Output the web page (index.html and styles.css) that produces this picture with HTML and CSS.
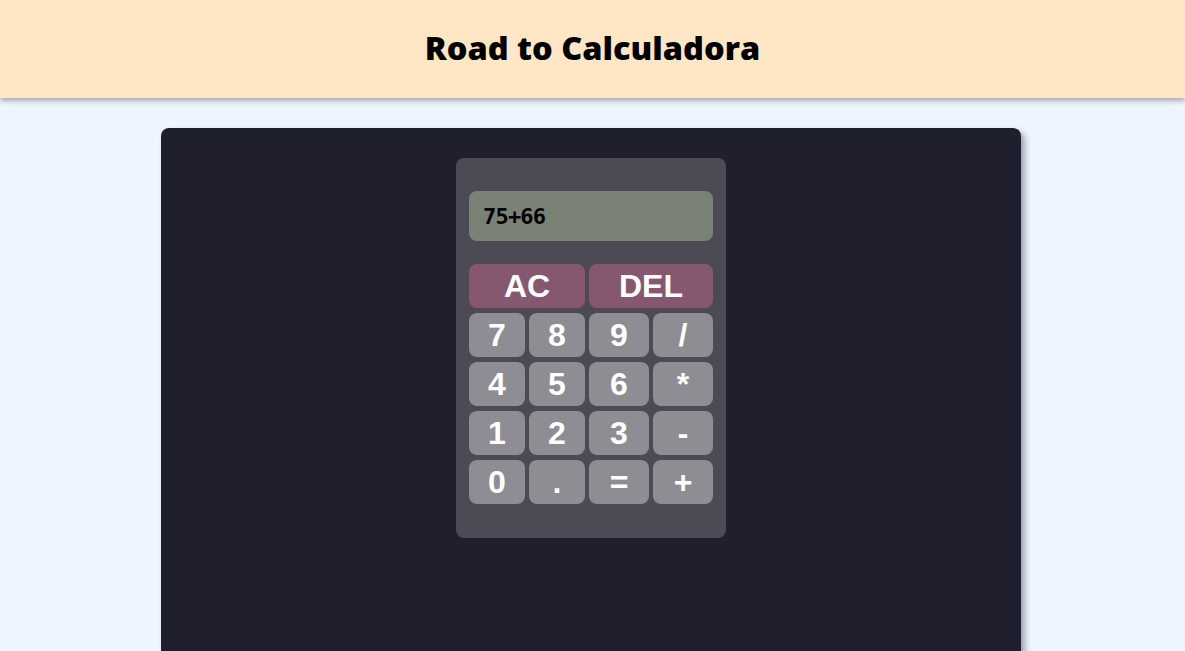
FILE: index.html
```html
<!DOCTYPE html>
<html lang="es">
<head>
<meta charset="utf-8">
<title>Road to Calculadora</title>
<link rel="stylesheet" href="styles.css">
</head>
<body>
<header class="top">
  <h1 class="title">Road to Calculadora</h1>
</header>
<main class="page">
  <section class="panel">
    <div class="calc">
      <div class="display">75+66</div>
      <div class="keys">
        <button class="key key-fn key-ac">AC</button>
        <button class="key key-fn key-del">DEL</button>
        <button class="key">7</button>
        <button class="key">8</button>
        <button class="key">9</button>
        <button class="key">/</button>
        <button class="key">4</button>
        <button class="key">5</button>
        <button class="key">6</button>
        <button class="key">*</button>
        <button class="key">1</button>
        <button class="key">2</button>
        <button class="key">3</button>
        <button class="key">-</button>
        <button class="key">0</button>
        <button class="key">.</button>
        <button class="key">=</button>
        <button class="key">+</button>
      </div>
    </div>
  </section>
</main>
</body>
</html>
```

FILE: styles.css
```css
* { box-sizing: border-box; }
html, body { margin: 0; padding: 0; }
body {
  background: #eef5ff;
  font-family: "Liberation Sans", Arial, sans-serif;
  height: 651px;
  overflow: hidden;
}
.top {
  height: 98px;
  background: #ffe6c4;
  display: flex;
  align-items: center;
  justify-content: center;
  padding-bottom: 4px;
  box-shadow: 0 3px 5px rgba(80, 80, 100, 0.45);
  position: relative;
  z-index: 1;
}
.title {
  margin: 0;
  font-family: "Open Sans", "Noto Sans", sans-serif;
  font-weight: 800;
  font-size: 32.5px;
  letter-spacing: 0;
  color: #000;
}
.page {
  display: flex;
  justify-content: center;
  padding-top: 30px;
  padding-right: 3px;
  height: 553px;
  overflow: hidden;
}
.panel {
  width: 860px;
  height: 600px;
  flex: none;
  background: #201f2d;
  border-radius: 8px;
  box-shadow: 4px 4px 6px rgba(60, 60, 80, 0.45);
  display: flex;
  justify-content: center;
  padding-top: 30px;
  align-items: flex-start;
}
.calc {
  width: 270px;
  background: #4b4a55;
  border-radius: 8px;
  padding: 33px 13px 34px;
}
.display {
  height: 50px;
  background: #7a8276;
  border-radius: 8px;
  padding: 0 14px;
  display: flex;
  align-items: center;
  font-family: "DejaVu Sans Mono", monospace;
  font-weight: bold;
  font-size: 22px;
  letter-spacing: -0.8px;
  color: #000;
  margin-bottom: 23px;
}
.keys {
  display: grid;
  grid-template-columns: 56px 56px 60px 60px;
  grid-auto-rows: 44px;
  column-gap: 4px;
  row-gap: 5px;
}
.key {
  border: none;
  border-radius: 8px;
  background: #8d8d93;
  color: #fff;
  font-family: "Liberation Sans", Arial, sans-serif;
  font-weight: bold;
  font-size: 32px;
  padding: 0;
  display: flex;
  align-items: center;
  justify-content: center;
}
.key-fn {
  background: #85586f;
  grid-column: span 2;
}
```
